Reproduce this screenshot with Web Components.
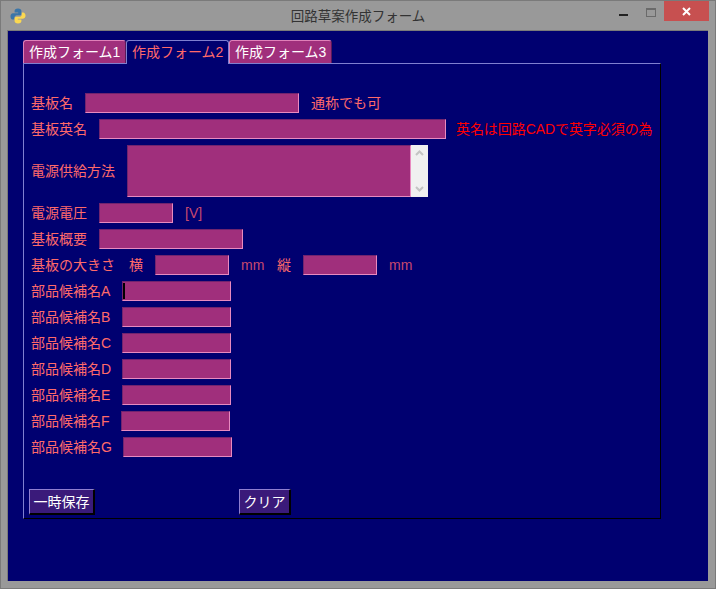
<!DOCTYPE html>
<html lang="ja">
<head>
<meta charset="utf-8">
<title>回路草案作成フォーム</title>
<style>
  html, body { margin: 0; padding: 0; background: #999; }
</style>
</head>
<body>

<template id="appWindowTemplate">
  <style>
    :host {
      display: flex;
      flex-direction: column;
      box-sizing: border-box;
      width: 716px;
      height: 589px;
      background: #999;
      border: 1px solid #7a7a7a;
      font-family: "Liberation Sans", "Noto Sans CJK JP", sans-serif;
    }
    .titlebar {
      display: grid;
      grid-template-columns: 1fr auto 1fr;
      height: 29px;
      flex: none;
      color: #333;
    }
    .icon { display: block; margin: 7px 0 0 9px; width: 16px; height: 16px; }
    .title {
      font-size: 13.5px;
      line-height: 16px;
      margin-top: 8px;
    }
    .controls { display: flex; justify-content: flex-end; margin-right: 6px; }
    .btn { display: flex; align-items: center; justify-content: center; height: 20px; }
    .min { width: 27px; padding-top: 7px; box-sizing: border-box; }
    .max { width: 27px; padding-top: 2px; box-sizing: border-box; }
    .close { width: 45px; background: #c75050; }
    .client {
      flex: 1;
      margin: 0 7px 7px 6px;
      background: #000070;
      border-top: 1px solid #7a7a7a;
      border-left: 1px solid #7a7a7a;
      padding: 9px 0 0 15px;
    }
  </style>
  <div class="titlebar">
    <div>
      <svg class="icon" viewBox="0 0 16 16">
        <path d="M8 0.5C5.5 0.5 4.6 1.5 4.6 3V4.6H8.2V5.3H3C1.3 5.3 0.5 6.6 0.5 8.4C0.5 10.3 1.4 11.6 3 11.6H4.4V9.6C4.4 8.2 5.5 7.2 6.9 7.2H9.6C10.7 7.2 11.4 6.4 11.4 5.4V3C11.4 1.5 10.2 0.5 8 0.5Z" fill="#3a75a8"/>
        <path d="M8 15.5C10.5 15.5 11.4 14.5 11.4 13V11.4H7.8V10.7H13C14.7 10.7 15.5 9.4 15.5 7.6C15.5 5.7 14.6 4.4 13 4.4H11.8V6.4C11.8 7.8 10.6 8.8 9.2 8.8H6.4C5.3 8.8 4.6 9.6 4.6 10.6V13C4.6 14.5 5.8 15.5 8 15.5Z" fill="#fbd850"/>
      </svg>
    </div>
    <div class="title"><slot name="title"></slot></div>
    <div class="controls">
      <div class="btn min"><svg width="9" height="3" style="display:block"><rect width="9" height="2" y="1" fill="#222"/></svg></div>
      <div class="btn max"><svg width="10" height="9" style="display:block"><rect x="0.5" y="0.5" width="9" height="8" fill="none" stroke="#6a6a6a"/><rect x="0" y="0" width="10" height="2" fill="#6a6a6a"/></svg></div>
      <div class="btn close"><svg width="9" height="9" style="display:block"><path d="M1 1L8 8M8 1L1 8" stroke="#fff" stroke-width="2"/></svg></div>
    </div>
  </div>
  <div class="client"><slot></slot></div>
</template>

<template id="noteBookTemplate">
  <style>
    :host { display: block; width: 638px; font-size: 14px; }
    .tabs { display: flex; height: 23px; align-items: flex-end; }
    .panel {
      box-sizing: border-box;
      height: 456px;
      border-style: solid;
      border-width: 1px 1px 1px 1px;
      border-color: #7f7fd0 #000 #000 #7f7fd0;
      padding: 29px 0 0 7px;
    }
  </style>
  <div class="tabs"><slot name="tab"></slot></div>
  <div class="panel"><slot></slot></div>
</template>

<template id="noteTabTemplate">
  <style>
    :host {
      display: block;
      box-sizing: border-box;
      height: 23px;
      width: 103px;
      padding-left: 5px;
      line-height: 23px;
      color: #fff;
      background: #a02f7c;
      border: 1px solid #e080b8;
      border-bottom: 0;
      border-right-color: #5a1a5a;
      border-radius: 3px 3px 0 0;
      white-space: nowrap;
    }
    :host([selected]) {
      background: #000070;
      color: #ff6a6a;
      height: 24px;
      margin-bottom: -1px;
      position: relative;
      border-color: #7f7fd0;
    }
  </style>
  <slot></slot>
</template>

<template id="formRowTemplate">
  <style>
    :host {
      display: flex;
      align-items: center;
      gap: 12px;
      margin-bottom: 6px;
      color: #ff6a6a;
      font-size: 14px;
      line-height: 20px;
      white-space: nowrap;
    }
  </style>
  <slot></slot>
</template>

<template id="textFieldTemplate">
  <style>
    :host {
      display: block;
      flex: none;
      box-sizing: border-box;
      height: 20px;
      background: #a02f7c;
      border: 1px solid;
      border-color: #70246e #e88ac0 #e88ac0 #70246e;
    }
    .caret { display: none; width: 2px; height: 16px; margin: 1px 0 0 0; background: #000; }
    :host([focused]) .caret { display: block; }
  </style>
  <div class="caret"></div>
</template>

<template id="textAreaTemplate">
  <style>
    :host { display: flex; flex: none; height: 52px; width: 301px; }
    .box {
      flex: 1;
      box-sizing: border-box;
      background: #a02f7c;
      border: 1px solid;
      border-color: #70246e #e88ac0 #e88ac0 #70246e;
    }
    .bar {
      width: 17px;
      background: #f0f0f0;
      display: flex;
      flex-direction: column;
      justify-content: space-between;
      align-items: center;
      padding: 5px 0;
      box-sizing: border-box;
    }
  </style>
  <div class="box"></div>
  <div class="bar">
    <svg width="9" height="6"><path d="M1 5L4.5 1.5L8 5" fill="none" stroke="#c4c4c4" stroke-width="2"/></svg>
    <svg width="9" height="6"><path d="M1 1L4.5 4.5L8 1" fill="none" stroke="#c4c4c4" stroke-width="2"/></svg>
  </div>
</template>

<template id="pushButtonTemplate">
  <style>
    :host {
      display: block;
      flex: none;
      box-sizing: border-box;
      height: 26px;
      line-height: 25px;
      text-align: center;
      color: #fff;
      font-size: 14px;
      background: #3a1a7a;
      border: 1px solid;
      border-color: #8f7fd0 #000 #000 #8f7fd0;
      border-width: 1px 2px 2px 1px;
    }
  </style>
  <slot></slot>
</template>

<script>
  (function appForm(customElements, document) {
    'use strict';

    // todas las clases hacen lo mismo: clonar su template al shadow root
    function define(tag, templateId) {
      class Item extends HTMLElement {
        constructor() {
          super();
          const shadowRoot = this.attachShadow({mode: 'open'});
          const templ = document.getElementById(templateId);
          shadowRoot.appendChild(document.importNode(templ.content, true));
        }
      }
      customElements.define(tag, Item);
    }

    define('app-window', 'appWindowTemplate');
    define('note-book', 'noteBookTemplate');
    define('note-tab', 'noteTabTemplate');
    define('form-row', 'formRowTemplate');
    define('text-field', 'textFieldTemplate');
    define('text-area', 'textAreaTemplate');
    define('push-button', 'pushButtonTemplate');
  })(window.customElements, document);
</script>

<app-window>
  <span slot="title">回路草案作成フォーム</span>
  <note-book>
    <note-tab slot="tab">作成フォーム1</note-tab>
    <note-tab slot="tab" selected>作成フォーム2</note-tab>
    <note-tab slot="tab">作成フォーム3</note-tab>

    <form-row><span>基板名</span><text-field style="width:214px"></text-field><span>通称でも可</span></form-row>
    <form-row><span>基板英名</span><text-field style="width:347px"></text-field><span style="color:#f00;margin-left:-2px;letter-spacing:-.07px">英名は回路CADで英字必須の為</span></form-row>
    <form-row><span>電源供給方法</span><text-area></text-area></form-row>
    <form-row><span>電源電圧</span><text-field style="width:74px"></text-field><span style="color:#c8486e">[V]</span></form-row>
    <form-row><span>基板概要</span><text-field style="width:144px"></text-field></form-row>
    <form-row><span style="margin-right:2px">基板の大きさ</span><span>横</span><text-field style="width:74px"></text-field><span style="width:24px;color:#c8486e">mm</span><span>縦</span><text-field style="width:74px"></text-field><span style="color:#c8486e">mm</span></form-row>
    <form-row><span style="width:79px">部品候補名A</span><text-field focused style="width:109px"></text-field></form-row>
    <form-row><span style="width:79px">部品候補名B</span><text-field style="width:109px"></text-field></form-row>
    <form-row><span style="width:79px">部品候補名C</span><text-field style="width:109px"></text-field></form-row>
    <form-row><span style="width:79px">部品候補名D</span><text-field style="width:109px"></text-field></form-row>
    <form-row><span style="width:79px">部品候補名E</span><text-field style="width:109px"></text-field></form-row>
    <form-row><span style="width:78px">部品候補名F</span><text-field style="width:109px"></text-field></form-row>
    <form-row><span style="width:80px">部品候補名G</span><text-field style="width:109px"></text-field></form-row>

    <form-row style="margin:32px 0 0 -2px;gap:0">
      <push-button style="width:66px">一時保存</push-button>
      <push-button style="width:52px;margin-left:144px">クリア</push-button>
    </form-row>
  </note-book>
</app-window>

</body>
</html>
